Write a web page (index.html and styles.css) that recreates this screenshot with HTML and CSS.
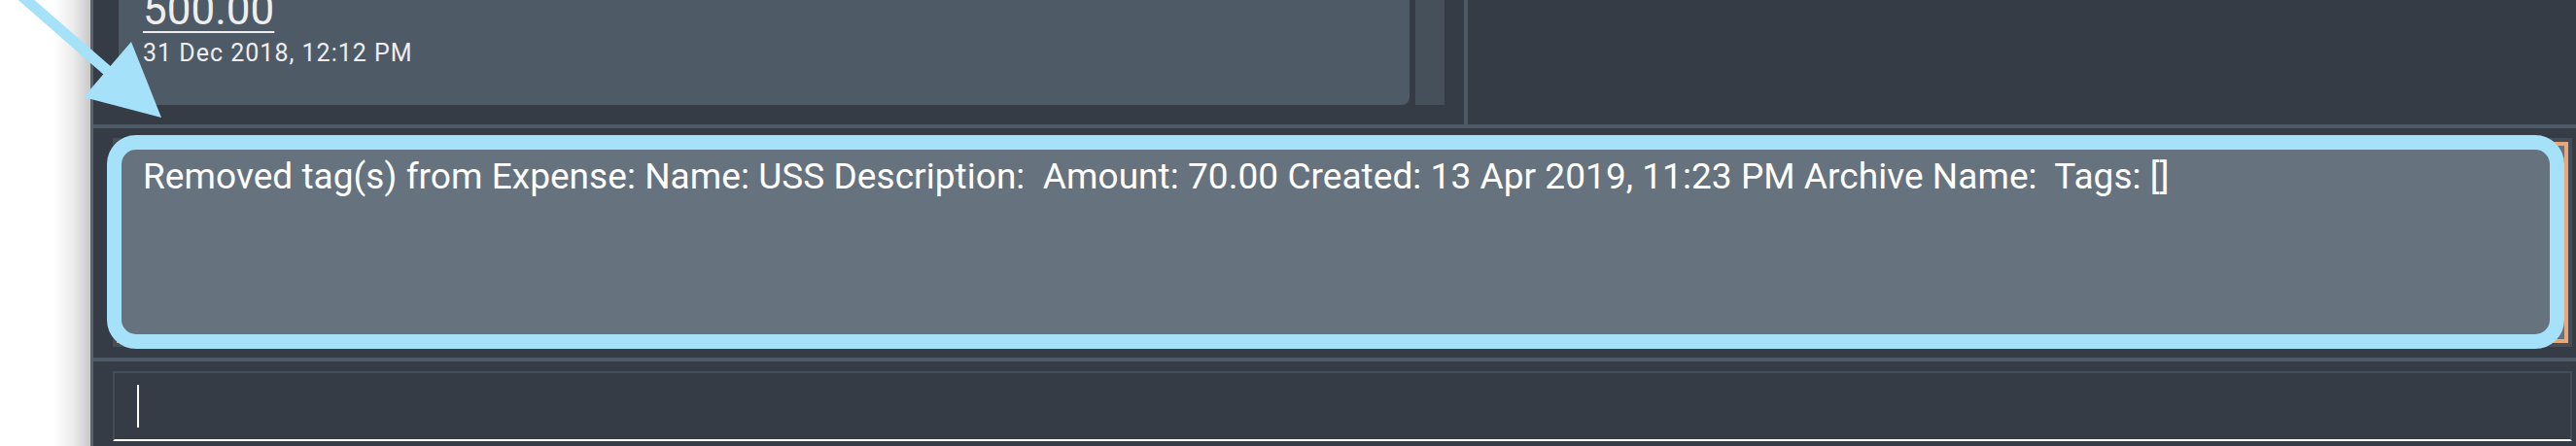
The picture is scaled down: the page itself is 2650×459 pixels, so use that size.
FILE: index.html
```html
<!DOCTYPE html>
<html>
<head>
<meta charset="utf-8">
<link rel="stylesheet" href="styles.css">
</head>
<body>
<div class="gutter"></div>
<div class="app">
  <div class="top">
    <div class="list">
      <div class="card">
        <div class="amount">500.00</div>
        <div class="date">31 Dec 2018, 12:12 PM</div>
      </div>
      <div class="scrollbar"></div>
    </div>
    <div class="vdivider"></div>
    <div class="detail"></div>
  </div>
  <div class="hline"></div>
  <div class="result-area">
    <div class="result-box">
      <div class="result-text">Removed tag(s) from Expense: Name: USS Description:&nbsp; Amount: 70.00 Created: 13 Apr 2019, 11:23 PM Archive Name:&nbsp; Tags: []</div>
      <div class="highlight"></div>
    </div>
  </div>
  <div class="hline"></div>
  <div class="command-area">
    <div class="command-box"><span class="caret"></span></div>
  </div>
</div>
<svg class="arrow" width="200" height="140" viewBox="0 0 200 140">
  <line x1="-12" y1="-34" x2="112" y2="74" stroke="#a5e1f8" stroke-width="11"/>
  <polygon points="86,100 135,43 166,121" fill="#a5e1f8"/>
</svg>
</body>
</html>
```
FILE: styles.css
```css
html, body {
  margin: 0;
  padding: 0;
}
body {
  width: 2650px;
  height: 459px;
  overflow: hidden;
  display: flex;
  background: #ffffff;
  font-family: Roboto, "Liberation Sans", sans-serif;
  color: #ffffff;
  position: relative;
}
.gutter {
  width: 93px;
  flex: none;
  background: linear-gradient(to right, #ffffff 0, #ffffff 55px, #ececec 75px, #c9c9c9 93px);
}
.app {
  flex: 1;
  border-left: 3px solid #59626d;
  background: #363c46;
  display: flex;
  flex-direction: column;
  min-width: 0;
}
.top {
  height: 128px;
  display: flex;
  flex: none;
}
.list {
  width: 1410px;
  flex: none;
  box-sizing: border-box;
  padding-left: 26px;
  display: flex;
  align-items: flex-start;
  gap: 6px;
}
.card {
  width: 1328px;
  height: 108px;
  flex: none;
  box-sizing: border-box;
  background: #4f5a67;
  border-radius: 0 0 8px 8px;
  padding: 0 0 39px 25px;
  display: flex;
  flex-direction: column;
  justify-content: flex-end;
  overflow: hidden;
}
.amount {
  font-size: 44px;
  line-height: 44px;
  text-decoration: underline;
  text-decoration-thickness: 2px;
  text-underline-offset: 7px;
  color: #eeeeee;
}
.date {
  margin-top: 9px;
  font-size: 25px;
  line-height: 28px;
  letter-spacing: 1px;
  color: #eeeeee;
}
.scrollbar {
  width: 30px;
  height: 108px;
  background: #46505b;
  flex: none;
}
.vdivider {
  width: 4px;
  flex: none;
  background: #4e5966;
}
.detail {
  flex: 1;
}
.hline {
  height: 4px;
  flex: none;
  background: #4e5966;
}
.result-area {
  height: 236px;
  flex: none;
  box-sizing: border-box;
  padding: 10px 4px 0 20px;
}
.result-box {
  position: relative;
  height: 215px;
  box-sizing: border-box;
  border: 4px solid #454d58;
  background: #66737e;
  box-shadow: inset 0 0 0 4px #e9a679;
  padding: 15px 0 0 27px;
}
.result-text {
  font-size: 37px;
  line-height: 42px;
  letter-spacing: 0.05px;
  white-space: pre;
  color: #ffffff;
}
.highlight {
  position: absolute;
  left: -10px;
  top: -7px;
  width: 2528px;
  height: 220px;
  box-sizing: border-box;
  border: 15px solid #a5e1f8;
  border-radius: 30px;
}
.command-area {
  flex: 1;
  box-sizing: border-box;
  padding: 10px 4px 0 20px;
}
.command-box {
  height: 72px;
  box-sizing: border-box;
  border: 2px solid #454d58;
  border-bottom-color: #ffffff;
  padding: 12px 0 0 23px;
}
.caret {
  display: block;
  width: 2px;
  height: 44px;
  background: #ffffff;
}
.arrow {
  position: absolute;
  left: 0;
  top: 0;
}
```
